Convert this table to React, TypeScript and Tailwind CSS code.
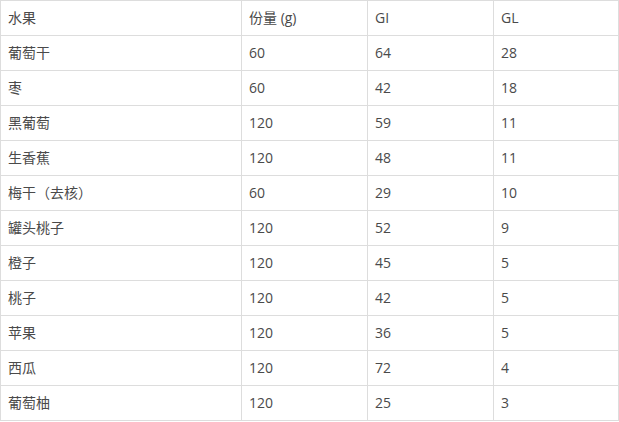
import React from "react";

const rows: string[][] = [
  ["水果", "份量 (g)", "GI", "GL"],
  ["葡萄干", "60", "64", "28"],
  ["枣", "60", "42", "18"],
  ["黑葡萄", "120", "59", "11"],
  ["生香蕉", "120", "48", "11"],
  ["梅干（去核）", "60", "29", "10"],
  ["罐头桃子", "120", "52", "9"],
  ["橙子", "120", "45", "5"],
  ["桃子", "120", "42", "5"],
  ["苹果", "120", "36", "5"],
  ["西瓜", "120", "72", "4"],
  ["葡萄柚", "120", "25", "3"],
];

export default function App() {
  return (
    <div className="w-[619px] h-[422px] bg-white">
      <div
        className="grid grid-cols-[241px_126px_126px_125px] w-[619px] border-t border-l border-[#dddddd] text-[14px] text-[#4a4a4a]"
        style={{ fontFamily: '"Open Sans", "Noto Sans CJK SC", sans-serif' }}
      >
        {rows.map((r, i) =>
          r.map((c, j) => (
            <div
              key={`${i}-${j}`}
              className="h-[35px] border-r border-b border-[#dddddd] pl-[7px] flex items-center leading-none whitespace-nowrap"
            >
              {c}
            </div>
          ))
        )}
      </div>
    </div>
  );
}
